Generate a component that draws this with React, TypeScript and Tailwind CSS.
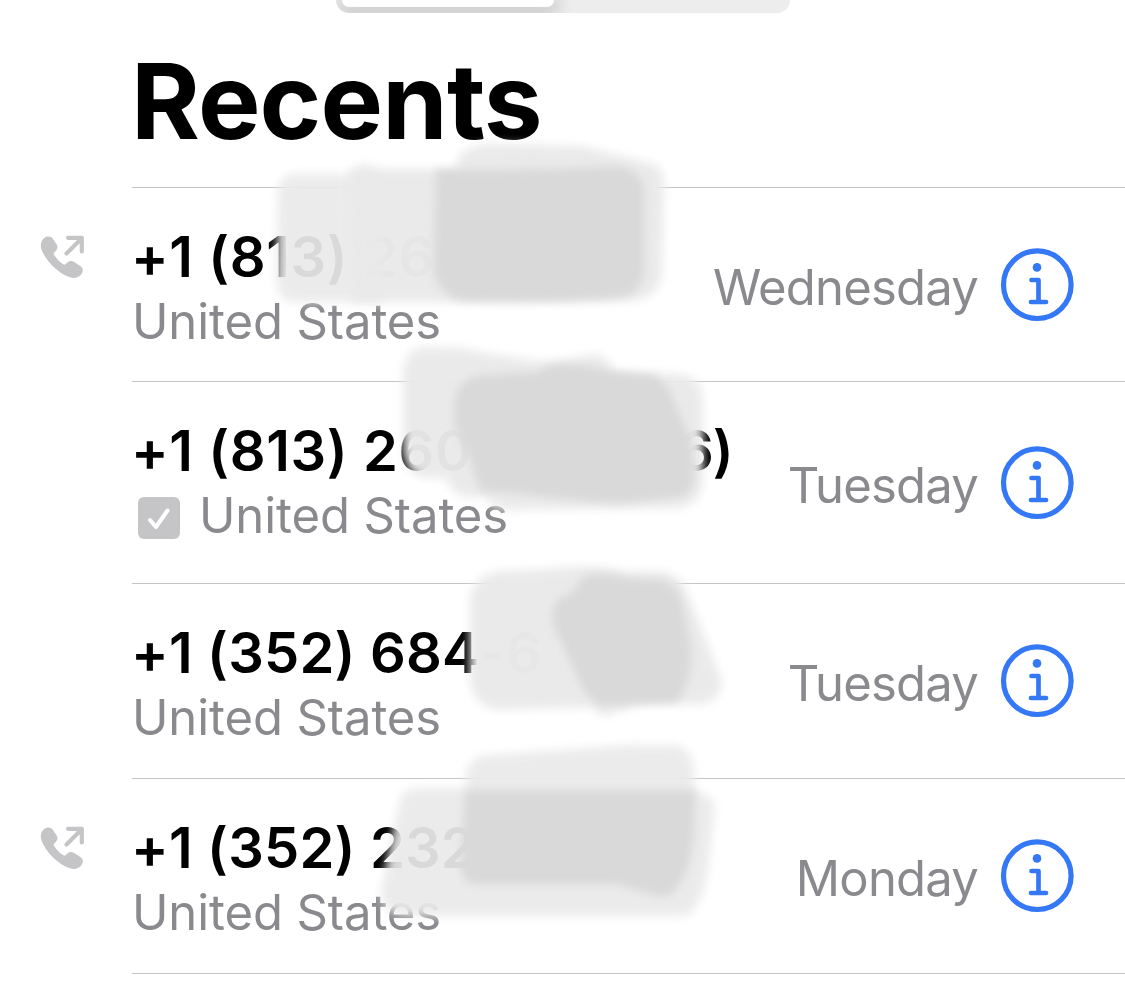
type Call = {
  number: string;
  tail?: string;
  tracking: string;
  day: string;
  outgoing?: boolean;
  verified?: boolean;
  height: string;
};

const calls: Call[] = [
  { number: "+1 (813) 26", tracking: "tracking-[0.6px]", day: "Wednesday", outgoing: true, height: "h-[194px]" },
  { number: "+1 (813) 260", tail: "6)", tracking: "tracking-[0.6px]", day: "Tuesday", verified: true, height: "h-[202px]" },
  { number: "+1 (352) 684-6", tracking: "tracking-[0.2px]", day: "Tuesday", height: "h-[195px]" },
  { number: "+1 (352) 232", tracking: "tracking-[0.2px]", day: "Monday", outgoing: true, height: "h-[195px]" },
];

function OutgoingIcon() {
  return (
    <svg width="46" height="46" viewBox="0 0 46 46" fill="none" className="text-[#c5c5c7]">
      <path
        d="M4.600 2.800C6.800 1.100 10.600 0.800 12.800 3.800L16.500 9.300C18.100 11.800 17.700 14 15.800 15.900L14.200 17.500C13.500 18.200 13.500 19 14.100 20C16.200 23.400 20 27.300 23.300 29.300C24.300 29.900 25.100 29.800 25.800 29.100L27.300 27.600C29.400 25.600 31.600 25.400 34.200 27L40.700 31.300C43.700 33.500 43.200 36.800 41.300 39.200C38.800 42.500 34.500 43.900 30.500 42.600C18.500 38.700 5.700 26 1.500 14.500C-0.100 9.600 1.100 5.500 4.600 2.800Z"
        fill="currentColor"
      />
      <path
        d="M28 2.800H41.800V16.500M41 4L26.500 18.500"
        stroke="currentColor"
        strokeWidth="4.200"
        strokeLinecap="round"
        strokeLinejoin="round"
      />
    </svg>
  );
}

function CheckIcon() {
  return (
    <svg width="42" height="42" viewBox="0 0 42 42" fill="none">
      <rect width="42" height="42" rx="6" fill="#c5c5c7" />
      <path d="M12 23L18 30L29.500 13.500" stroke="#fff" strokeWidth="4" strokeLinecap="round" strokeLinejoin="round" />
    </svg>
  );
}

function InfoIcon() {
  return (
    <svg width="74" height="74" viewBox="0 0 74 74" fill="none" className="text-[#3478f6]">
      <circle cx="37.300" cy="36.700" r="33.800" stroke="currentColor" strokeWidth="5.200" />
      <circle cx="37" cy="19.400" r="4.300" fill="currentColor" />
      <path
        d="M31.500 32H38.500V54M31 54H46"
        stroke="currentColor"
        strokeWidth="4.700"
        strokeLinecap="round"
        strokeLinejoin="round"
      />
    </svg>
  );
}

// Soft marker strokes that hide part of each number
function Smudges() {
  return (
    <svg className="pointer-events-none absolute inset-0" width="1125" height="988" viewBox="0 0 1125 988">
      <defs>
        <filter id="soft" x="-10%" y="-15%" width="120%" height="130%">
          <feGaussianBlur stdDeviation="5" />
        </filter>
        <filter id="softer" x="-10%" y="-15%" width="120%" height="130%">
          <feGaussianBlur stdDeviation="4" />
        </filter>
      </defs>
      <g fill="#eaeaea" stroke="#eaeaea" strokeWidth="4" strokeLinejoin="round">
        <path
          filter="url(#soft)"
          opacity="0.930"
          d="M292 176H380V300H292Q280 298 278 280L280 190Q282 178 292 176Z"
        />
        <path
          filter="url(#soft)"
          opacity="0.985"
          d="M350 175Q354 168 364 166Q375 169 378 171H457L461 157Q470 147 490 146L580 148Q615 156 650 165Q662 168 662 185L660 275Q658 296 630 299L480 300H353Z"
        />
        <path
          filter="url(#soft)"
          opacity="0.970"
          d="M405 370Q408 350 425 349L460 350Q500 358 548 364L595 356Q605 356 614 374L680 376Q700 378 701 400V480Q700 502 680 506L510 508Q490 506 488 495H465Q450 490 448 476H425Q408 474 405 450Z"
        />
        <path
          filter="url(#soft)"
          opacity="0.990"
          d="M472 600Q474 578 500 573L545 571Q600 565 622 573L665 574Q680 578 686 595L698 625L720 682Q718 700 700 702H640L605 714L590 705L500 708Q475 706 472 680Z"
        />
        <path
          filter="url(#soft)"
          opacity="0.930"
          d="M468 790V775Q470 758 490 757Q560 752 630 747H675Q690 750 692 770L693 792L708 798Q714 804 712 815L706 870Q700 908 685 914H405Q384 910 383 894L391 850L402 800Q406 790 420 790Z"
        />
      </g>
      <g fill="#d9d9d9" stroke="#d9d9d9" strokeWidth="3" strokeLinejoin="round" filter="url(#softer)">
        <path d="M437 171Q540 172 620 168Q640 172 643 190V270Q640 292 620 296Q550 302 460 299Q439 292 435 270Z" />
        <path d="M456 400Q460 380 480 377L540 373L550 366Q580 364 612 373L650 376Q665 380 672 400L689 440L693 480Q690 496 675 496L620 502Q560 498 520 492L482 490Q476 474 473 464L456 425Z" />
        <path d="M556 605Q560 597 575 594Q578 580 590 576Q610 574 628 580L660 581Q675 586 680 600L690 650Q690 685 675 701L600 704Q585 695 578 675L562 640Q550 622 556 605Z" />
        <path d="M466 792H694L692 840Q686 885 665 896Q645 892 618 883L475 883Q462 882 462 865Z" />
      </g>
    </svg>
  );
}

function CallRow({ call }: { call: Call }) {
  return (
    <div className={`flex ${call.height}`}>
      <div className="w-[132px] shrink-0 pt-[47px] pl-[40px]">{call.outgoing && <OutgoingIcon />}</div>
      <div className="flex flex-1 items-center border-b border-[#c4c4c6]">
        <div className="flex-1 self-start pt-[37px]">
          <div
            className={`-ml-[1px] flex h-[65px] text-[56px] leading-[65px] font-semibold whitespace-nowrap ${call.tracking}`}
          >
            <span className={call.tail ? "w-[547px]" : undefined}>{call.number}</span>
            {call.tail && <span className="tracking-[-1px]">{call.tail}</span>}
          </div>
          <div className="flex h-[63px] items-center gap-[19px] text-[49px] leading-[63px] tracking-[-0.1px] text-[#8a8a8e]">
            {call.verified && (
              <span className="pt-[5px] pl-[6px]">
                <CheckIcon />
              </span>
            )}
            <span>United States</span>
          </div>
        </div>
        <span className="pt-[6px] text-[49px] leading-[62px] tracking-[-0.8px] text-[#8a8a8e]">{call.day}</span>
        <div className="mr-[51px] ml-[22px]">
          <InfoIcon />
        </div>
      </div>
    </div>
  );
}

export default function App() {
  return (
    <main className="relative flex h-[988px] w-[1125px] flex-col overflow-hidden bg-white font-['Inter',sans-serif] text-black">
      <header className="ml-[132px] h-[188px] shrink-0 border-b border-[#c4c4c6]">
        <div className="ml-[204px] h-[13px] w-[454px] overflow-hidden rounded-b-[24px] bg-[#ededee]">
          <div className="ml-[6px] h-[7px] w-[212px] rounded-b-[18px] bg-white shadow-[0_4px_16px_6px_rgba(0,0,0,0.14)]" />
        </div>
        <h1 className="mt-[25px] -ml-[1px] text-[105px] leading-[126px] font-bold tracking-[-0.8px]">Recents</h1>
      </header>
      {calls.map((call, i) => (
        <CallRow key={i} call={call} />
      ))}
      <Smudges />
    </main>
  );
}
